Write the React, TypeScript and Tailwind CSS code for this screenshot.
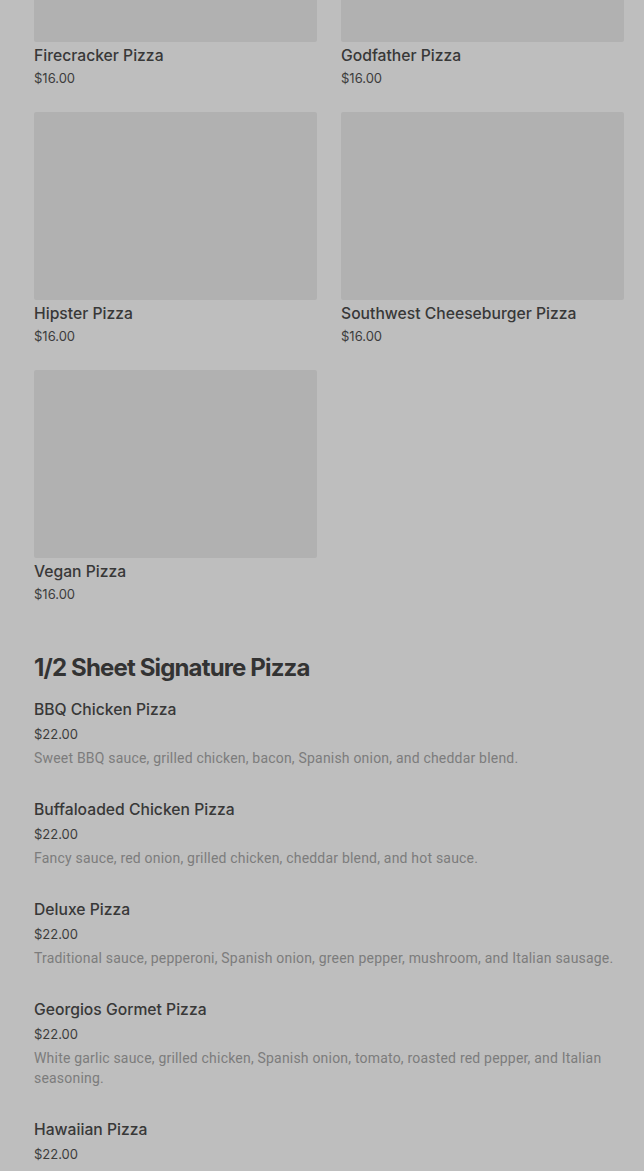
const gridItems = [
  "Firecracker Pizza",
  "Godfather Pizza",
  "Hipster Pizza",
  "Southwest Cheeseburger Pizza",
  "Vegan Pizza",
];

const sheetItems = [
  {
    name: "BBQ Chicken Pizza",
    desc: "Sweet BBQ sauce, grilled chicken, bacon, Spanish onion, and cheddar blend.",
  },
  {
    name: "Buffaloaded Chicken Pizza",
    desc: "Fancy sauce, red onion, grilled chicken, cheddar blend, and hot sauce.",
  },
  {
    name: "Deluxe Pizza",
    desc: "Traditional sauce, pepperoni, Spanish onion, green pepper, mushroom, and Italian sausage.",
  },
  {
    name: "Georgios Gormet Pizza",
    desc: "White garlic sauce, grilled chicken, Spanish onion, tomato, roasted red pepper, and Italian seasoning.",
  },
  {
    name: "Hawaiian Pizza",
    desc: "Traditional sauce, ham, pineapple, and cheddar blend.",
  },
];

function GridCard({ name }: { name: string }) {
  return (
    <div>
      <div className="h-[188px] w-full rounded-[2px] bg-[#b1b1b1]" />
      <div className="mt-[4px] text-[15.7px] font-medium leading-[20px] text-[#383838]">
        {name}
      </div>
      <div className="mt-[3px] text-[13px] leading-[18px] text-[#3c3c3c]">
        $16.00
      </div>
    </div>
  );
}

function ListItem({ name, desc }: { name: string; desc: string }) {
  return (
    <div className="pb-[32px]">
      <div className="text-[15.7px] font-medium leading-[20px] text-[#383838]">
        {name}
      </div>
      <div className="mt-[4px] text-[13px] leading-[20px] text-[#3c3c3c]">
        $22.00
      </div>
      <div
        className="mt-[4px] text-[14px] leading-[20px] tracking-[0.2px] text-[#7c7c7c]"
        style={{ fontFamily: "Roboto, 'Liberation Sans', sans-serif" }}
      >
        {desc}
      </div>
    </div>
  );
}

export default function App() {
  return (
    <div
      className="h-[1171px] overflow-hidden bg-[#bebebe] pl-[34px] pr-[20px]"
      style={{ fontFamily: "Inter, Roboto, 'Liberation Sans', sans-serif" }}
    >
      <div className="-mt-[146px] grid grid-cols-2 gap-x-[24px] gap-y-[25px]">
        {gridItems.map((n) => (
          <GridCard key={n} name={n} />
        ))}
      </div>
      <h2 className="mt-[49px] text-[24px] font-bold leading-[32px] tracking-[-0.85px] text-[#333333]">
        1/2 Sheet Signature Pizza
      </h2>
      <div className="mt-[16px]">
        {sheetItems.map((it) => (
          <ListItem key={it.name} name={it.name} desc={it.desc} />
        ))}
      </div>
    </div>
  );
}
